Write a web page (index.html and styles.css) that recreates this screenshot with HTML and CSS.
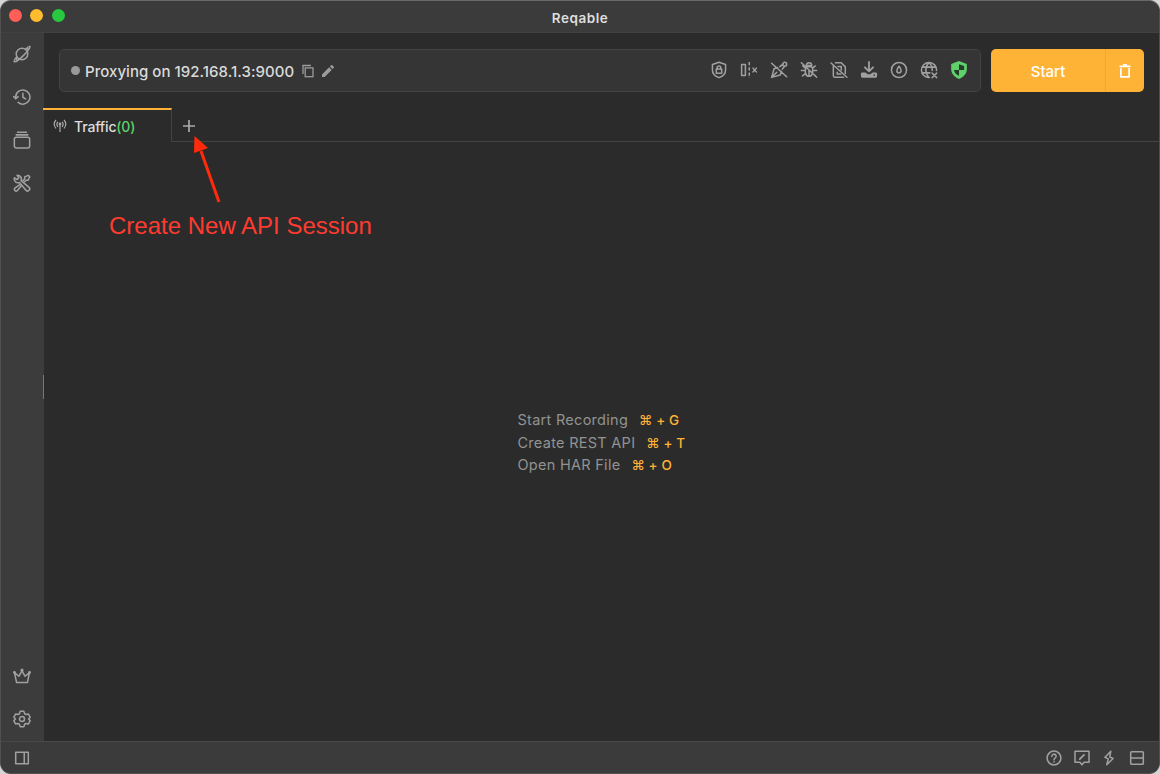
FILE: index.html
```html
<!DOCTYPE html>
<html lang="en">
<head>
<meta charset="utf-8">
<title>Reqable</title>
<link rel="stylesheet" href="styles.css">
</head>
<body>
<div class="window">
  <header class="titlebar">
    <div class="lights"><span class="light red"></span><span class="light yellow"></span><span class="light green"></span></div>
    <h1 class="title">Reqable</h1>
  </header>
  <div class="body">
    <nav class="sidebar">
      <svg class="icon" viewBox="0 0 20 20"><circle cx="10" cy="10" r="6.400"/><path d="M14.300 4.300C16.500 2.200 18 1.200 18.600 1.600c1 .9-2.100 5.200-6.800 9.900S2.400 19.300 1.400 18.400c-.6-.6.4-2.300 2.400-4.700M14.300 4.300l3 .2M3.800 13.700l.4 2.600"/></svg>
      <svg class="icon" viewBox="0 0 20 20"><path d="M3 11.800V10a7.900 7.900 0 1 1 2.700 6"/><path d="M.8 9.600l2.300 2.400 2.500-2.400M11 5.800v4.500l3 1.800"/></svg>
      <svg class="icon" viewBox="0 0 20 20"><rect x="1.500" y="7" width="17" height="11.800" rx="2.200"/><path d="M3.500 4.300h13M5 1.500h10"/></svg>
      <svg class="icon" viewBox="0 0 20 20"><path d="M1.600 4.200l3 2L6.500 4.300l-2-2.900a4.300 4.300 0 0 1 4.500 6l8.800 7.400a2.300 2.300 0 0 1-3.200 3.400L7.200 9.500a4.300 4.300 0 0 1-5.600-5.300z"/><path d="M11.300 7.200l1.700-1.700V3.200L17 1.500 18.600 3l-1.700 4h-2.300l-1.700 1.700M8.100 11.500l-5.800 4a1.900 1.900 0 0 0 2.500 2.900l4.700-5.500"/></svg>
      <span class="spacer"></span>
      <svg class="icon" viewBox="0 0 20 20"><path d="M1.700 6.300L4 17.300h12l2.300-11-4.800 4L10 4.200l-3.500 6.100z"/><circle class="fill" cx="10" cy="3.500" r=".9"/><circle class="fill" cx="1.600" cy="6" r=".8"/><circle class="fill" cx="18.400" cy="6" r=".8"/></svg>
      <svg class="icon" viewBox="0 0 20 20"><path d="M7.900 1.500h4.200l.8 2.700 1.500.8 2.600-.6 2.100 3.700-1.800 1.900 1.800 1.900-2.100 3.700-2.600-.6-1.500.8-.8 2.700H7.900l-.8-2.700-1.500-.8-2.600.6-2.100-3.700L2.700 10 .9 8.100 3 4.400l2.600.6 1.500-.8z"/><circle cx="10" cy="10" r="2.800"/></svg>
    </nav>
    <main class="main">
      <div class="toolbar">
        <div class="proxy">
          <span class="dot"></span>
          <span class="address">Proxying on 192.168.1.3:9000</span>
          <svg class="copy" viewBox="0 0 14 14"><path d="M2 10V1.500h8"/><rect x="4.200" y="3.900" width="7.800" height="8.800"/></svg>
          <svg class="edit" viewBox="0 0 14 14"><path d="M1 10.400V13h2.600l7.100-7.100-2.600-2.600zM8.900 2.500l2.600 2.600 1.200-1.200q.6-.6 0-1.200l-1.400-1.400q-.6-.6-1.200 0z"/></svg>
          <div class="tools">
            <svg class="icon" viewBox="0 0 20 20"><path d="M10 1.500l7.300 2.300V10c0 3.700-2.900 7-7.300 8.500-4.400-1.500-7.300-4.800-7.300-8.500V3.800z"/><rect x="7" y="8.800" width="6" height="4.700"/><path d="M8 8.800V7.500a2 2 0 0 1 4 0v1.300"/></svg>
            <svg class="icon" viewBox="0 0 20 20"><path d="M1.800 4h4.200v12H1.800z"/><path d="M10.300 1.200v17.600" stroke-dasharray="3.600 2.200" stroke-linecap="butt"/><path d="M14.300 7.800l4 4.400m0-4.400l-4 4.400" stroke-width="1.400"/></svg>
            <svg class="icon" viewBox="0 0 20 20"><path d="M1.800 18.200l2.700-9.500 4-1.500M1.800 18.200l9.500-2.700 1.500-4M1.800 18.200l5.700-5.700M11 6.300l3.300-2.800M13.700 9l2.800-3.300M1.800 2.500l16.700 15"/><circle cx="16.300" cy="3.700" r="2.200"/></svg>
            <svg class="icon" viewBox="0 0 20 20"><path d="M7 5a3 3 0 0 1 6 0zM6 8.500Q6 6.500 8 6.500h4q2 0 2 2V13q-1 4-4 4t-4-4zM10 10v7M1.500 10.500H6M14 10.500h4.500M3 5.500l3 2.500M17 5.500l-3 2.500M2.800 16.500L6 14M17.200 16.500L14 14M1.500 2l17 16"/></svg>
            <svg class="icon" viewBox="0 0 20 20"><path d="M6 2h6.500L17 6.500V14M3.700 5.500v11q0 1.500 1.500 1.500H15M8 12.500v2h4M9 6h3.500v4M1.200 2.200L18.800 18"/></svg>
            <svg class="icon" viewBox="0 0 20 20"><path d="M10 1v10M5.500 7l4.500 4.500L14.500 7" stroke-width="2"/><path class="fill" d="M2.500 12.800H6l2.500 2h3l2.500-2h3.500q1.500 0 1.500 1.500v2.500q0 1.700-1.500 1.700h-15Q1 18.500 1 16.800v-2.500q0-1.500 1.500-1.500z" stroke="none"/><circle cx="15.800" cy="15.700" r=".9" fill="#353535" stroke="none"/></svg>
            <svg class="icon" viewBox="0 0 20 20"><circle cx="10" cy="10" r="8.400"/><path d="M10 5.800c-1.700 2.200-2.400 3.500-2.400 4.900a2.400 2.400 0 0 0 4.800 0c0-1.400-.7-2.700-2.400-4.900z"/></svg>
            <svg class="icon" viewBox="0 0 20 20"><path d="M10.500 18.400A8.400 8.400 0 1 1 18.400 10.500M10 1.600c-4.700 5-4.700 11.800 0 16.800M10 1.600q3.700 3.500 3.600 8.900M2.400 6.800h15.200M2.400 13.200H11M13.500 13.500l5 5m0-5l-5 5"/></svg>
            <svg class="icon shield" viewBox="0 0 20 20"><path class="shield-body" d="M10 0l8.700 3.200v6.100c0 4.800-3.600 8.900-8.700 10.700C4.900 18.200 1.300 14.100 1.300 9.300V3.200z"/><path class="shield-cut" d="M10 3.500V10h5.700V5.500zM10 10H4.500q.6 4.300 5.500 6.500z"/></svg>
          </div>
        </div>
        <div class="actions">
          <button class="start">Start</button>
          <button class="clear" aria-label="Clear"><svg viewBox="0 0 16 16"><path d="M3.900 5v8.800h8.200V5M2.500 3.300h11"/><path d="M6 1.900h4"/></svg></button>
        </div>
      </div>
      <div class="tabs">
        <div class="tab"><svg class="antenna" viewBox="0 0 14 14"><path d="M3 1Q-.6 5 3 9.500M11 1q3.600 4 0 8.500M4.900 2.800q-2 2.300 0 5M9.100 2.800q2 2.300 0 5M7 5.500V13"/><circle cx="7" cy="5" r=".8"/></svg><span class="tab-name">Traffic<span class="count">(0)</span></span></div>
        <div class="tab-rest"><svg class="plus" viewBox="0 0 14 14"><path d="M7 1v12M1 7h12"/></svg></div>
      </div>
      <section class="empty">
        <dl class="hints">
          <div class="hint"><dt>Start Recording</dt><dd>⌘ + G</dd></div>
          <div class="hint"><dt>Create REST API</dt><dd>⌘ + T</dd></div>
          <div class="hint"><dt>Open HAR File</dt><dd>⌘ + O</dd></div>
        </dl>
      </section>
      <span class="grip"></span>
    </main>
  </div>
  <footer class="statusbar">
    <svg class="icon" viewBox="0 0 20 20"><path d="M3 3.500h14v13H3zM12.500 3.500v13"/></svg>
    <div class="status-right">
      <svg class="icon" viewBox="0 0 20 20"><circle cx="10" cy="10" r="7.700"/><path d="M7.600 8.200a2.400 2.400 0 1 1 3.600 2q-1.200.7-1.200 1.800M10 14v.5"/></svg>
      <svg class="icon" viewBox="0 0 20 20"><path d="M2.200 2.500h15.600v12.300h-5.500L10 17.500l-2.300-2.700H2.200z"/><path d="M7.500 11.300l4.800-4.800" stroke-width="2"/></svg>
      <svg class="icon" viewBox="0 0 20 20"><path d="M12 2.500L5.500 9.200l3.700 1.800-1.700 6.500 7-7-3.700-1.800z"/></svg>
      <svg class="icon" viewBox="0 0 20 20"><rect x="3" y="3" width="14" height="14" rx="1"/><path d="M3 10h14"/></svg>
    </div>
  </footer>
  <div class="note">
    <svg class="arrow" viewBox="0 0 30 70"><path class="shaft" d="M28 66L10 15"/><path class="head" d="M3.500 0l13.500 12-14 5z"/></svg>
    <p class="note-text">Create New API Session</p>
  </div>
</div>
</body>
</html>
```
FILE: styles.css
```css
* { box-sizing: border-box; }
body { margin: 0; background: #d4d6d5; font-family: Inter, "Liberation Sans", sans-serif; }
.window { position: relative; display: flex; flex-direction: column; width: 1160px; height: 774px; border: 1px solid #505050; border-top-color: #686868; border-radius: 11px; background: #2b2b2b; overflow: hidden; }
.titlebar { height: 32px; flex: none; display: grid; grid-template-columns: 1fr auto 1fr; align-items: center; background: #3b3b3b; border-bottom: 1px solid #414141; }
.lights { display: flex; gap: 8.500px; padding-left: 7.500px; align-self: start; padding-top: 8px; }
.light { width: 13px; height: 13px; border-radius: 50%; }
.red { background: #ff5f57; }
.yellow { background: #febc2e; }
.green { background: #28c840; }
.title { margin: 2px 0 0; font-size: 13.500px; font-weight: 600; color: #dedede; letter-spacing: .55px; }
.body { flex: 1; display: flex; min-height: 0; }
.sidebar { width: 43px; display: flex; flex-direction: column; align-items: center; gap: 25px; padding: 12px 2px 13px 0; background: #3c3c3c; }
.spacer { flex: 1; }
.icon { width: 18px; height: 18px; flex: none; fill: none; stroke: #a0a0a0; stroke-width: 1.700; stroke-linejoin: round; stroke-linecap: round; }
.fill { fill: #a0a0a0; }
.main { position: relative; flex: 1; display: flex; flex-direction: column; min-width: 0; }
.toolbar { display: flex; gap: 10px; padding: 16px 15px 16px; }
.proxy { flex: 1; height: 43px; display: flex; align-items: center; padding: 0 12px 0 11px; background: #353535; border: 1px solid #434343; border-radius: 5px; }
.dot { width: 9px; height: 9px; border-radius: 50%; background: #999; }
.address { margin: 2px 7px 0 5px; font-size: 15px; font-weight: 500; color: #dadada; white-space: nowrap; letter-spacing: .04px; }
.copy, .edit { width: 14px; height: 14px; }
.copy { fill: none; stroke: #9c9c9c; stroke-width: 1.300; }
.edit { margin-left: 6px; fill: #9c9c9c; }
.tools { margin-left: auto; display: flex; gap: 12px; margin-top: -1px; }
.shield { stroke: none; }
.shield-body { fill: #5ed16a; }
.shield-cut { fill: #263b29; }
.actions { display: flex; width: 153px; height: 43px; border-radius: 5px; overflow: hidden; background: #ffb336; }
.start, .clear { border: 0; padding: 0; background: none; color: #fff; font: 500 15px Inter, sans-serif; }
.start { width: 115px; padding-top: 2px; border-right: 1px solid #eca832; }
.clear { flex: 1; display: flex; align-items: center; justify-content: center; }
.clear svg { width: 16px; height: 16px; fill: none; stroke: #fff; stroke-width: 1.700; }
.tabs { display: flex; height: 34px; }
.tab { width: 129px; display: flex; align-items: center; gap: 7px; padding: 0 9px 0 10px; margin-left: -1px; border-top: 2px solid #ffb336; border-right: 1px solid #434343; }
.antenna { width: 14px; height: 14px; fill: #aaa; stroke: #aaa; stroke-width: 1.200; }
.antenna path { fill: none; }
.tab-name { font-size: 14px; font-weight: 500; color: #dedede; letter-spacing: -.15px; }
.count { color: #5ed16a; }
.tab-rest { flex: 1; display: flex; align-items: center; padding: 2px 0 0 10px; border-bottom: 1px solid #434343; }
.plus { width: 14px; height: 14px; stroke: #aaa; stroke-width: 1.700; }
.empty { flex: 1; }
.hints { margin: 267px 0 0 473.500px; }
.hint { display: flex; gap: 11px; height: 22.500px; line-height: 22.500px; font-size: 14.500px; letter-spacing: .28px; color: #929292; }
.hint dd { margin: 0; color: #ffb336; font-weight: 500; font-size: 13.500px; letter-spacing: .1px; }
.grip { position: absolute; left: -1px; top: 342px; width: 1px; height: 24px; background: #777; }
.statusbar { height: 32px; flex: none; display: flex; align-items: center; justify-content: space-between; padding: 0 13px 0 12px; background: #3b3b3b; border-top: 1px solid #484848; }
.status-right { display: flex; gap: 9.700px; }
.note { position: absolute; left: 108px; top: 135px; }
.arrow { display: block; width: 30px; height: 70px; margin-left: 82px; }
.shaft { stroke: #ff2b0b; stroke-width: 3; }
.head { fill: #ff2b0b; }
.note-text { margin: 6px 0 0; font: 24px/28px "Liberation Sans", sans-serif; color: #ff3b30; white-space: nowrap; }
```
